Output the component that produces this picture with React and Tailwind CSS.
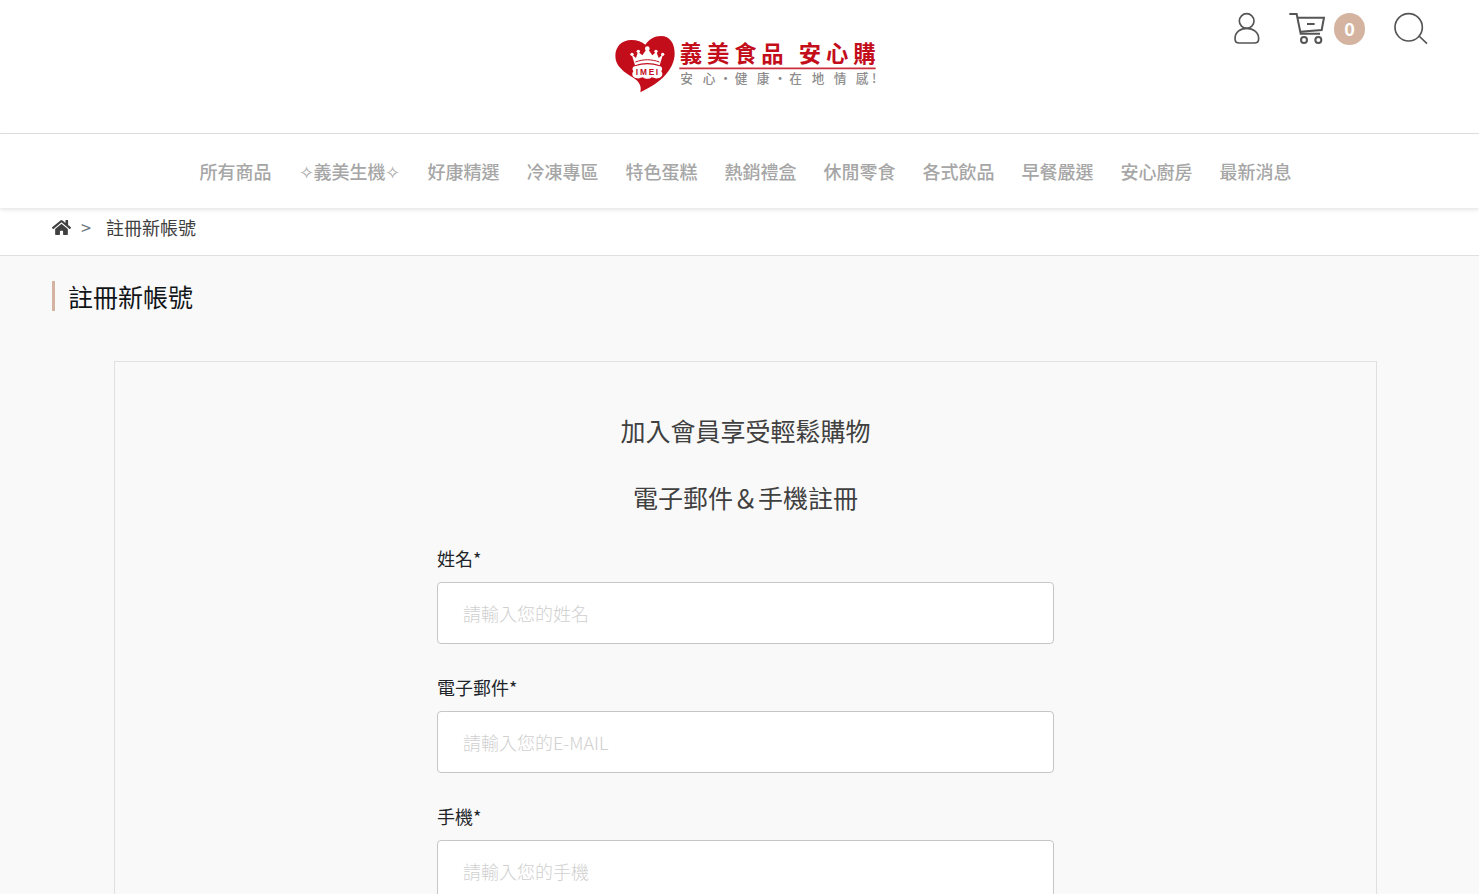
import React, { useState } from 'react';
import { FaHome } from 'react-icons/fa';

const navItems = [
  '所有商品',
  '✧義美生機✧',
  '好康精選',
  '冷凍專區',
  '特色蛋糕',
  '熱銷禮盒',
  '休閒零食',
  '各式飲品',
  '早餐嚴選',
  '安心廚房',
  '最新消息',
];

const fields = [
  { id: 'name', label: '姓名*', type: 'text', placeholder: '請輸入您的姓名' },
  { id: 'email', label: '電子郵件*', type: 'email', placeholder: '請輸入您的E-MAIL' },
  { id: 'phone', label: '手機*', type: 'tel', placeholder: '請輸入您的手機' },
];

const Logo = () => (
  <svg viewBox="42 27 789 180" className="w-[263px] h-[60px]" role="img" aria-label="義美食品 安心購">
    <path
      d="M136 59C147 42 164 33 183 33C210 33 225 56 224 88C222 132 186 172 121 202C125 184 119 171 101 159C72 141 46 124 46 93C46 64 66 45 94 45C112 45 126 50 136 59Z"
      fill="#c30d1b"
    />
    {/* crown */}
    <g fill="#fff">
      <path d="M95 88L108 99L114 80L127 91L142 70L157 91L169 80L176 99L189 88L179 121C154 112 130 112 105 121Z" />
      <circle cx="96" cy="88" r="5" />
      <circle cx="115" cy="79" r="5" />
      <circle cx="142" cy="71" r="7" />
      <circle cx="168" cy="79" r="5" />
      <circle cx="188" cy="88" r="5" />
      <path d="M105 124C130 116 154 116 179 124C186 124 189 132 184 139C190 147 187 158 176 159C167 163 161 157 155 157C148 163 136 163 129 157C123 157 117 163 108 159C97 158 94 147 100 139C95 132 98 124 105 124Z" />
    </g>
    <path d="M106 111C130 102 154 102 178 111" fill="none" stroke="#c30d1b" strokeWidth="3" />
    <text x="107 120 146 167" y="149" fontSize="25" fontWeight="700" fill="#c30d1b" className="font-['Liberation_Sans']">
      IMEI
    </text>
    <text x="239 321 403 484 596 678 760" y="111" fontSize="67" fontWeight="700" fill="#c30d1b">
      義美食品安心購
    </text>
    <path d="M238 130H827" stroke="#cc2f3c" strokeWidth="5" />
    <text x="241 308 358 404 470 521 568 635 701 767 816" y="175" fontSize="38" fontWeight="500" fill="#8c8c8c">
      安心·健康·在地情感!
    </text>
  </svg>
);

const UserIcon = () => (
  <svg viewBox="69 36 81 99" className="w-[27px] h-[33px]" fill="none" stroke="#555" strokeWidth="5">
    <circle cx="110" cy="63" r="22" />
    <path d="M110 85C90 85 75 97 75 116C75 124 80 129 88 129H133C141 129 146 124 146 116C146 97 130 85 110 85Z" />
  </svg>
);

const CartIcon = () => (
  <svg viewBox="237 36 108 99" className="w-[36px] h-[33px]" fill="none" stroke="#555" strokeWidth="6">
    <path d="M238 42H260L272 101H330M264 53H342L335 90L270 95M291 72H314" />
    <circle cx="282" cy="120" r="9" />
    <circle cx="325" cy="120" r="9" />
  </svg>
);

const SearchIcon = () => (
  <svg viewBox="551 36 102 99" className="w-[34px] h-[33px]" fill="none" stroke="#555" strokeWidth="5">
    <circle cx="595" cy="82" r="41" />
    <path d="M626 108L650 131" />
  </svg>
);

const Header = () => (
  <header className="bg-white">
    <div className="grid grid-cols-[1fr_auto_1fr] items-start h-[134px] pl-[52px] pr-[40px] border-b border-[#e0e0e0]">
      <span />
      <a href="#home" className="pt-[34px]">
        <Logo />
      </a>
      <div className="flex items-center justify-end pt-3 pr-[11px]">
        <button type="button" aria-label="會員">
          <UserIcon />
        </button>
        <button type="button" aria-label="購物車" className="flex items-center ml-[29px]">
          <CartIcon />
          <span className="flex items-center justify-center ml-[9px] w-[31px] h-8 rounded-full bg-[#d4b4a0] text-white text-[18px] font-bold">
            0
          </span>
        </button>
        <button type="button" aria-label="搜尋" className="ml-[29px]">
          <SearchIcon />
        </button>
      </div>
    </div>
    <nav className="relative flex justify-center items-center gap-[27px] h-[74px] pl-[52px] pr-[40px] shadow-[0_2px_4px_rgba(0,0,0,0.1)]">
      {navItems.map((item) => (
        <a key={item} href="#category" className="text-[18px] font-medium text-[#a6a6a6] whitespace-nowrap">
          {item}
        </a>
      ))}
    </nav>
  </header>
);

const App = () => {
  const [values, setValues] = useState({ name: '', email: '', phone: '' });

  const handleChange = (e) => {
    setValues({ ...values, [e.target.name]: e.target.value });
  };

  return (
    <div className="min-h-screen bg-[#f9f9f9] font-['Noto_Sans_CJK_TC',sans-serif] text-[#212529]">
      <Header />

      <div className="flex items-center h-12 pl-[52px] pb-2 bg-white border-b border-[#e0e0e0] text-[18px]">
        <a href="#home" aria-label="首頁" className="text-[#404040]">
          <FaHome size={19} />
        </a>
        <span className="ml-[10px] text-[#6c757d]">&gt;</span>
        <span className="ml-[15px] text-[#404040]">註冊新帳號</span>
      </div>

      <main className="pl-[52px] pr-[40px] pt-[25px]">
        <div className="flex items-center h-[30px]">
          <span className="w-[3px] h-[30px] bg-[#d4b4a0]" />
          <h1 className="ml-[13px] text-[25px] leading-[30px] text-[#111518]">註冊新帳號</h1>
        </div>

        <section className="mt-[50px] mx-[62px] px-4 pt-[49px] pb-12 border border-[#e0e0e0]">
          <h2 className="text-center text-[25px] leading-[38px] text-[#404040]">加入會員享受輕鬆購物</h2>
          <h2 className="mt-[29px] text-center text-[25px] leading-[38px] text-[#404040]">電子郵件＆手機註冊</h2>

          <form className="flex flex-col gap-[30px] w-full max-w-[617px] mx-auto mt-[29px]">
            {fields.map((field) => (
              <div key={field.id}>
                <label htmlFor={field.id} className="block mb-[11px] text-[18px] leading-[26px]">
                  {field.label}
                </label>
                <input
                  id={field.id}
                  name={field.id}
                  type={field.type}
                  value={values[field.id]}
                  onChange={handleChange}
                  placeholder={field.placeholder}
                  className="block w-full h-[62px] px-[25px] bg-white border border-[#c6c6c6] rounded text-[18px] font-light outline-none placeholder:text-[#d0d0d0]"
                />
              </div>
            ))}
          </form>
        </section>
      </main>
    </div>
  );
};

export default App;
